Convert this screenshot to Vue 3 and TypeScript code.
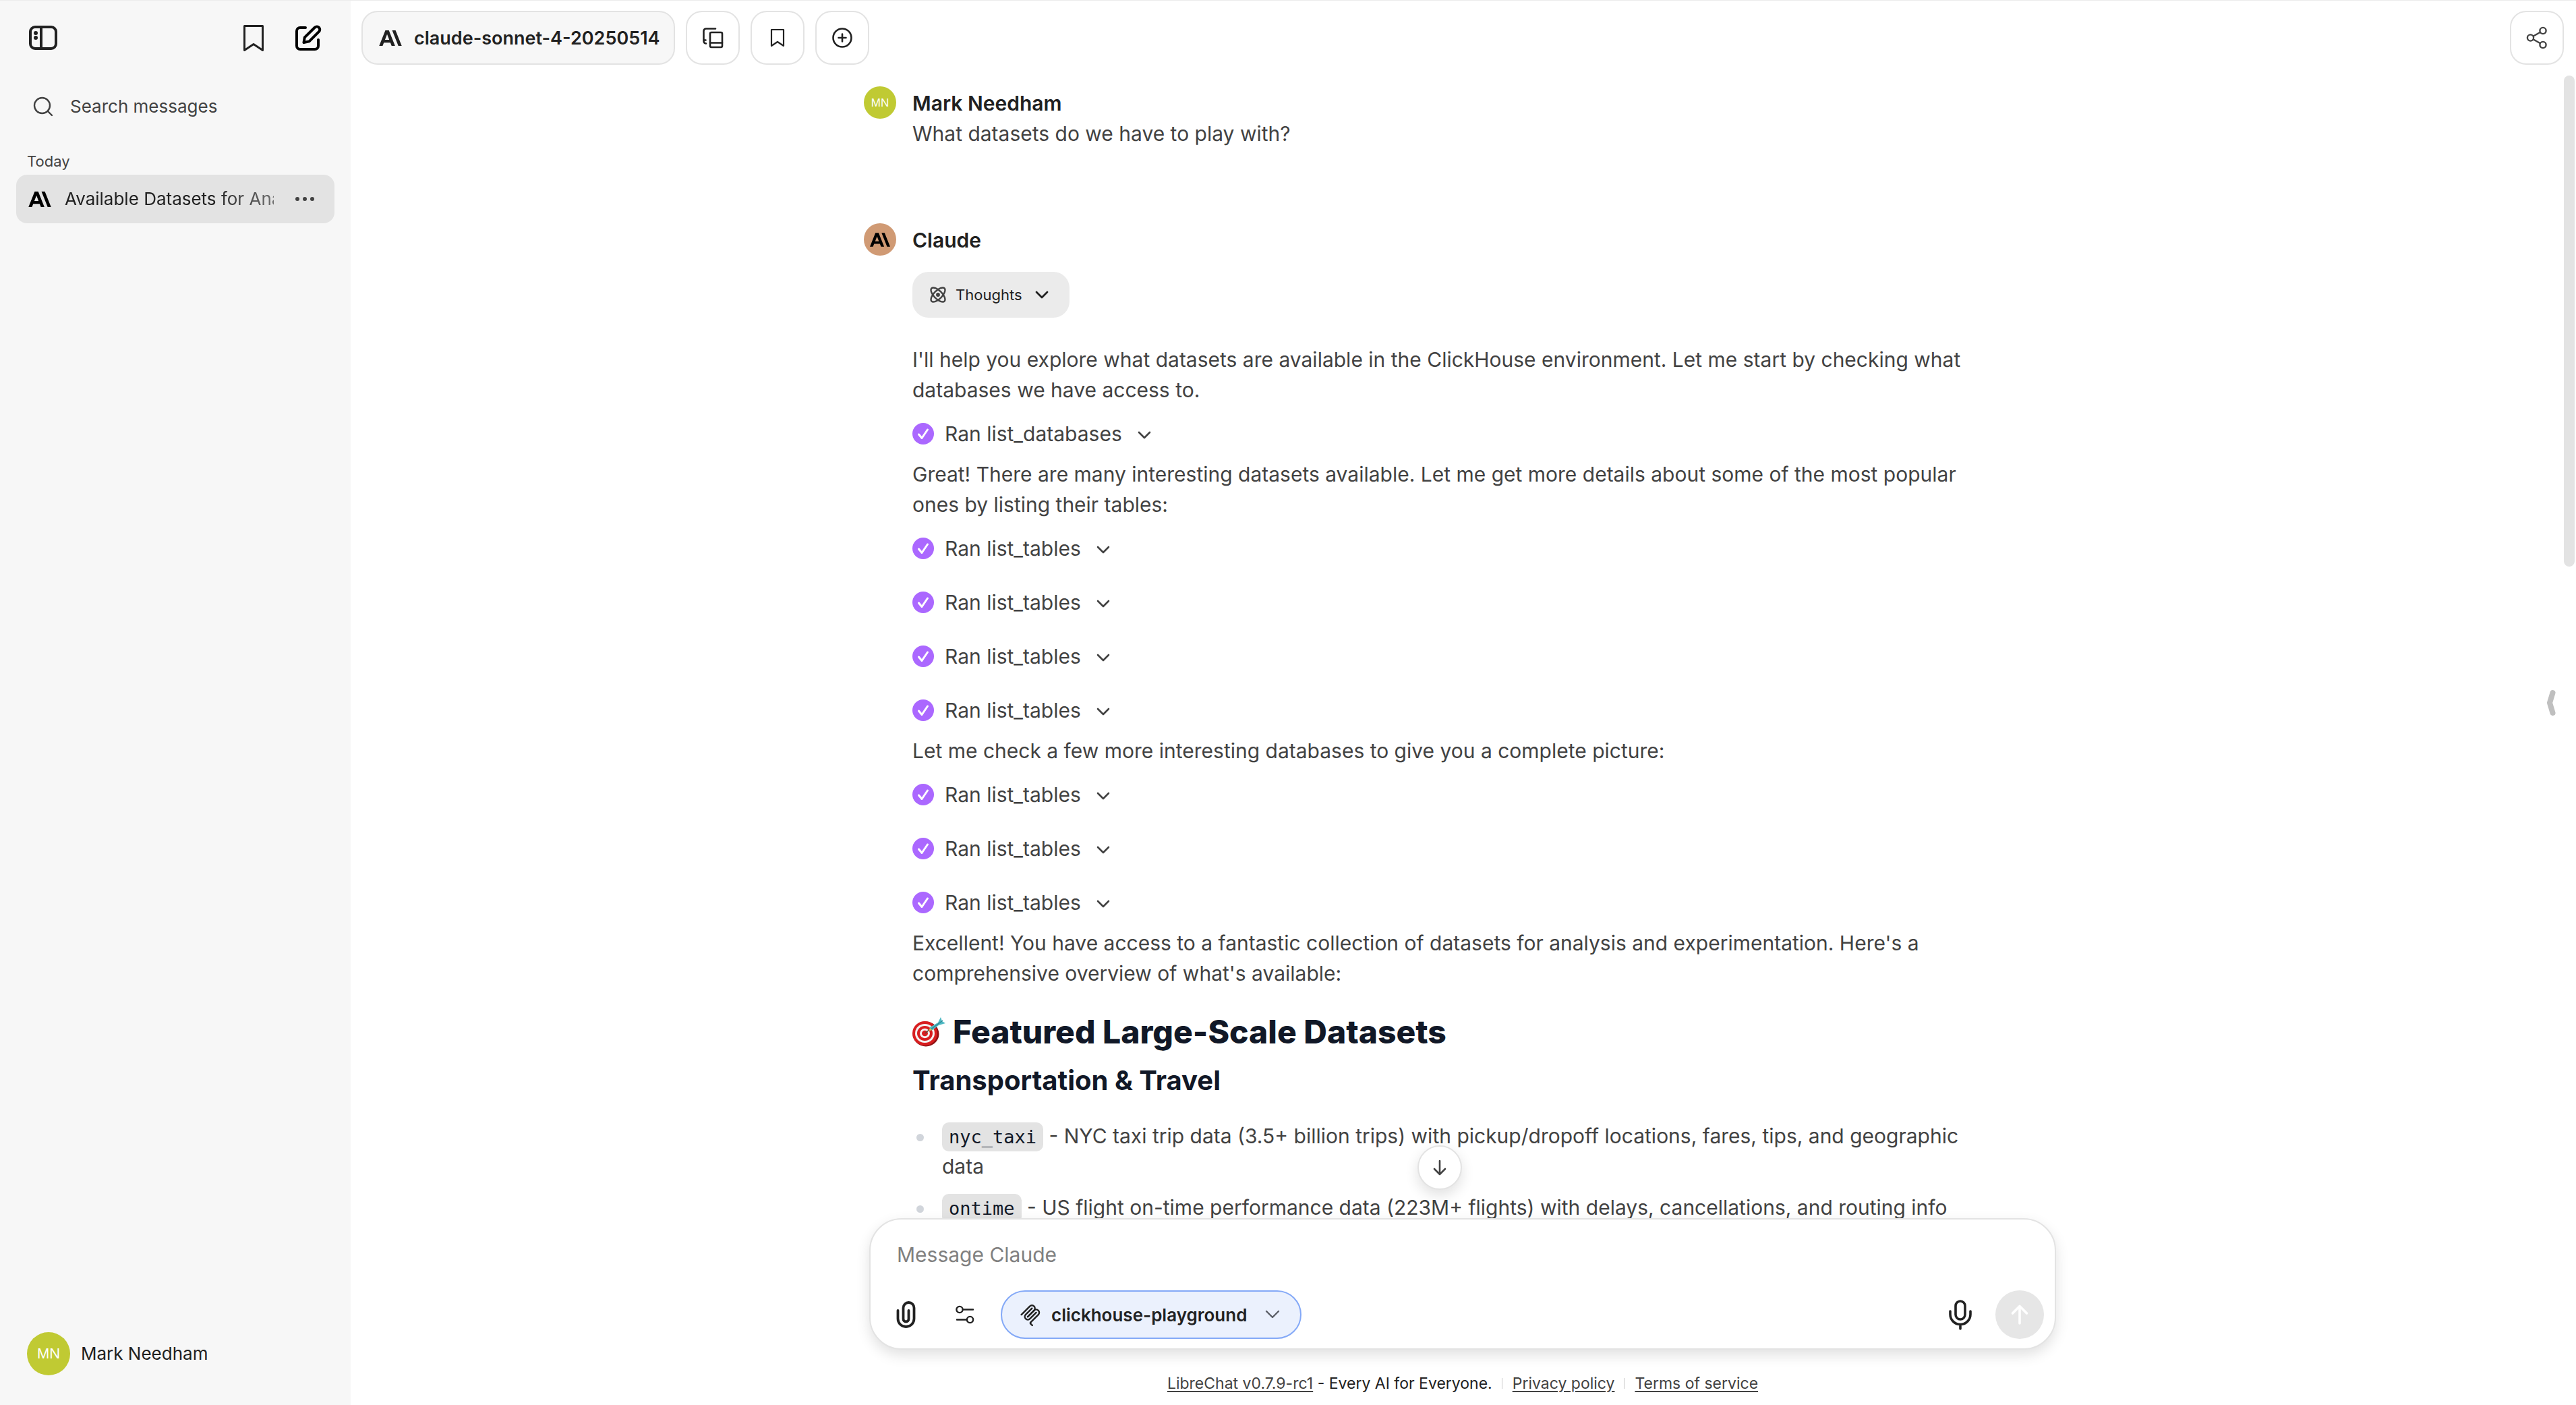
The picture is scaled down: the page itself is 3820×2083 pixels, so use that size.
<script setup lang="ts">
import { ref } from 'vue'

type Block =
  | { kind: 'text'; text: string }
  | { kind: 'tool'; text: string }

interface Dataset {
  code: string
  text: string
}

const search = ref('')
const draft = ref('')

const blocks: Block[] = [
  { kind: 'text', text: "I'll help you explore what datasets are available in the ClickHouse environment. Let me start by checking what databases we have access to." },
  { kind: 'tool', text: 'Ran list_databases' },
  { kind: 'text', text: 'Great! There are many interesting datasets available. Let me get more details about some of the most popular ones by listing their tables:' },
  { kind: 'tool', text: 'Ran list_tables' },
  { kind: 'tool', text: 'Ran list_tables' },
  { kind: 'tool', text: 'Ran list_tables' },
  { kind: 'tool', text: 'Ran list_tables' },
  { kind: 'text', text: 'Let me check a few more interesting databases to give you a complete picture:' },
  { kind: 'tool', text: 'Ran list_tables' },
  { kind: 'tool', text: 'Ran list_tables' },
  { kind: 'tool', text: 'Ran list_tables' },
  { kind: 'text', text: "Excellent! You have access to a fantastic collection of datasets for analysis and experimentation. Here's a comprehensive overview of what's available:" },
]

const datasets: Dataset[] = [
  { code: 'nyc_taxi', text: 'NYC taxi trip data (3.5+ billion trips) with pickup/dropoff locations, fares, tips, and geographic data' },
  { code: 'ontime', text: 'US flight on-time performance data (223M+ flights) with delays, cancellations, and routing info' },
]

const anthropic =
  'M13.827 3.52h3.603L24 20h-3.603l-6.57-16.48zm-7.258 0h3.767L16.906 20h-3.674l-1.343-3.461H5.017l-1.344 3.46H0L6.57 3.522zm4.132 9.959L8.453 7.687 6.205 13.48H10.7z'
</script>

<template>
  <div class="app">
    <aside class="sidebar">
      <div class="side-top">
        <button class="icon-btn" aria-label="Close sidebar">
          <svg width="44" height="38" viewBox="0 0 44 38" fill="none" stroke="#212121" stroke-width="4">
            <rect x="3" y="3" width="38" height="32" rx="7" />
            <path d="M19 3v32" />
            <circle cx="11" cy="12" r="3" fill="#212121" stroke="none" />
            <circle cx="11" cy="19" r="3" fill="#212121" stroke="none" />
          </svg>
        </button>
        <div class="side-actions">
          <button class="icon-btn" aria-label="Bookmarks">
            <svg width="32" height="42" viewBox="0 0 32 42" fill="none" stroke="#212121" stroke-width="3" stroke-linejoin="round">
              <path d="M2.500 3.500h27v36L16 30.500 2.500 39.500z" />
            </svg>
          </button>
          <button class="icon-btn" aria-label="New chat">
            <svg width="42" height="42" viewBox="0 0 42 42" fill="none" stroke="#000" stroke-width="4" stroke-linecap="round" stroke-linejoin="round">
              <path d="M17 6H9a5 5 0 0 0-5 5v22a5 5 0 0 0 5 5h22a5 5 0 0 0 5-5v-9" />
              <path d="M31 5.500a4.400 4.400 0 0 1 6.200 6.200L22.500 26.400 14.500 28l1.300-7.600z" />
            </svg>
          </button>
        </div>
      </div>
      <label class="search">
        <svg width="32" height="32" viewBox="0 0 32 32" fill="none" stroke="#424242" stroke-width="2.400" stroke-linecap="round">
          <circle cx="14.500" cy="14.500" r="11.500" />
          <path d="M23 23l6 6" />
        </svg>
        <input v-model="search" type="text" placeholder="Search messages" aria-label="Search messages" />
      </label>
      <h2 class="group">Today</h2>
      <a class="convo" href="#">
        <svg class="convo-logo" width="34" height="23" viewBox="0 3.500 24 16.500"><path :d="anthropic" /></svg>
        <span class="convo-title">Available Datasets for Analysis</span>
        <svg width="28" height="8" viewBox="0 0 28 8" fill="#424242">
          <circle cx="3" cy="4" r="3" /><circle cx="14" cy="4" r="3" /><circle cx="25" cy="4" r="3" />
        </svg>
      </a>
      <button class="account">
        <span class="avatar avatar-lg">MN</span>
        <span>Mark Needham</span>
      </button>
    </aside>

    <main class="main">
      <header class="header">
        <button class="model">
          <svg width="34" height="23" viewBox="0 3.500 24 16.500" fill="#212121"><path :d="anthropic" /></svg>
          <span>claude-sonnet-4-20250514</span>
        </button>
        <button class="square" aria-label="Presets">
          <svg width="32" height="32" viewBox="0 0 32 32" fill="none" stroke="#212121" stroke-width="2.600" stroke-linecap="round" stroke-linejoin="round">
            <rect x="12" y="8" width="18" height="22" rx="2" />
            <path d="M12 23.500h18M20 2.500H6a3.500 3.500 0 0 0-3.500 3.500v15a3.500 3.500 0 0 0 3.500 3.500M2.500 19.500h3" />
          </svg>
        </button>
        <button class="square" aria-label="Bookmark">
          <svg width="22" height="30" viewBox="0 0 22 30" fill="none" stroke="#212121" stroke-width="2.200" stroke-linejoin="round">
            <path d="M2 3h18v24l-9-6-9 6z" />
          </svg>
        </button>
        <button class="square" aria-label="Add conversation">
          <svg width="32" height="32" viewBox="0 0 32 32" fill="none" stroke="#212121" stroke-width="2.600" stroke-linecap="round">
            <circle cx="16" cy="16" r="13.500" />
            <path d="M16 10.500v11M10.500 16h11" />
          </svg>
        </button>
        <button class="square share" aria-label="Share">
          <svg width="32" height="34" viewBox="0 0 32 34" fill="none" stroke="#424242" stroke-width="2.400">
            <circle cx="6.500" cy="17" r="4.600" />
            <circle cx="25" cy="6.500" r="4.600" />
            <circle cx="25" cy="27.500" r="4.600" />
            <path d="M10.500 14.700l10.500-6M10.500 19.300l10.500 6" />
          </svg>
        </button>
      </header>

      <section class="scroll">
        <div class="thread">
          <article class="message">
            <span class="avatar">MN</span>
            <div class="body">
              <h3 class="name">Mark Needham</h3>
              <p>What datasets do we have to play with?</p>
            </div>
          </article>

          <article class="message reply">
            <span class="avatar avatar-claude">
              <svg width="30" height="21" viewBox="0 3.500 24 16.500"><path :d="anthropic" /></svg>
            </span>
            <div class="body">
              <h3 class="name">Claude</h3>
              <button class="thoughts">
                <svg width="28" height="28" viewBox="0 0 24 24" fill="none" stroke="#424242" stroke-width="2">
                  <circle cx="12" cy="12" r="1.500" fill="#424242" />
                  <path d="M20.200 20.200c2.040-2.030.02-7.360-4.500-11.900-4.540-4.520-9.870-6.540-11.900-4.500-2.040 2.030-.02 7.360 4.500 11.900 4.540 4.520 9.870 6.540 11.900 4.500Z" />
                  <path d="M15.700 15.700c4.520-4.540 6.540-9.870 4.500-11.900-2.030-2.040-7.360-.02-11.900 4.500-4.520 4.540-6.540 9.870-4.500 11.900 2.030 2.040 7.360.02 11.900-4.500Z" />
                </svg>
                <span>Thoughts</span>
                <svg class="thoughts-chevron" width="22" height="14" viewBox="0 0 22 14" fill="none" stroke="#212121" stroke-width="2.800" stroke-linecap="round" stroke-linejoin="round">
                  <path d="M3 3l8 8 8-8" />
                </svg>
              </button>
              <template v-for="(block, i) in blocks" :key="i">
                <p v-if="block.kind === 'text'">{{ block.text }}</p>
                <button v-else class="tool">
                  <svg width="32" height="32" viewBox="0 0 32 32" fill="none">
                    <circle cx="16" cy="16" r="16" fill="#ab68ff" />
                    <path d="M9.500 17l4.500 5.500L22.500 10" stroke="#fff" stroke-width="3" stroke-linecap="round" stroke-linejoin="round" />
                  </svg>
                  <span>{{ block.text }}</span>
                  <svg class="tool-chevron" width="22" height="14" viewBox="0 0 22 14" fill="none" stroke="#424242" stroke-width="2.600" stroke-linecap="round" stroke-linejoin="round">
                    <path d="M3 3l8 8 8-8" />
                  </svg>
                </button>
              </template>
              <h1 class="h-large">
                <svg width="50" height="44" viewBox="0 0 50 44" role="img" aria-label="Target">
                  <ellipse cx="20" cy="25" rx="19.500" ry="18.500" fill="#8f1214" />
                  <ellipse cx="18.500" cy="24" rx="18.500" ry="18" fill="#d81e20" />
                  <ellipse cx="18.500" cy="24" rx="14.500" ry="14" fill="#f4f1f1" />
                  <ellipse cx="18.500" cy="24" rx="11.500" ry="11" fill="#d81e20" />
                  <ellipse cx="18.500" cy="24" rx="7.500" ry="7.200" fill="#f4f1f1" />
                  <ellipse cx="18.500" cy="24" rx="4.500" ry="4.300" fill="#d81e20" />
                  <path d="M19 24L28 16" stroke="#5d4a3a" stroke-width="1.600" />
                  <path d="M25 20l1-5 12-7 4-8 2 6 5 3-10 3-9 7z" fill="#4fb9c4" />
                  <path d="M28 17.500L45 5" stroke="#2b8794" stroke-width="1.400" />
                  <path d="M24 20.500l2-4 3 2.500z" fill="#f2b632" />
                </svg>
                Featured Large-Scale Datasets
              </h1>
              <h2 class="h-medium">Transportation &amp; Travel</h2>
              <ul class="list">
                <li v-for="item in datasets" :key="item.code"><code>{{ item.code }}</code> - {{ item.text }}</li>
              </ul>
            </div>
          </article>
        </div>
        <div class="scrollbar"></div>
        <button class="to-bottom" aria-label="Scroll to bottom">
          <svg width="24" height="26" viewBox="0 0 24 26" fill="none" stroke="#424242" stroke-width="2.600" stroke-linecap="round" stroke-linejoin="round">
            <path d="M12 3v20M4 15l8 8 8-8" />
          </svg>
        </button>
      </section>

      <form class="composer" @submit.prevent>
        <textarea v-model="draft" rows="1" placeholder="Message Claude" aria-label="Message Claude"></textarea>
        <div class="tools">
          <button class="tool-btn" type="button" aria-label="Attach files">
            <svg width="32" height="44" viewBox="0 0 32 44" fill="none" stroke="#212121" stroke-width="3.800" stroke-linecap="round" stroke-linejoin="round">
              <path d="M3.500 16v12a12 12 0 0 0 24 0V12a8 8 0 0 0-16 0v16.500a4 4 0 0 0 8 0V16" />
            </svg>
          </button>
          <button class="tool-btn" type="button" aria-label="Tools">
            <svg width="30" height="30" viewBox="0 0 30 30" fill="none" stroke="#212121" stroke-width="2.400" stroke-linecap="round">
              <circle cx="7" cy="7.500" r="4.600" />
              <path d="M12 7.500h15M3 22.500h14" />
              <circle cx="22.500" cy="22.500" r="4.600" />
            </svg>
          </button>
          <button class="mcp" type="button">
            <svg width="36" height="36" viewBox="0 0 195 195" fill="none" stroke="#212121" stroke-width="13" stroke-linecap="round">
              <path d="M25 97.853L92.882 29.971c9.373-9.373 24.569-9.373 33.941 0 9.373 9.372 9.373 24.568 0 33.941l-51.265 51.265" />
              <path d="M76.265 114.470l50.558-50.558c9.373-9.373 24.569-9.373 33.942 0l.353.353c9.373 9.373 9.373 24.569 0 33.941L99.725 159.600c-3.124 3.124-3.124 8.189 0 11.313l12.606 12.607" />
              <path d="M109.853 46.941L59.648 97.146c-9.372 9.372-9.372 24.568 0 33.941 9.373 9.372 24.569 9.372 33.941 0l50.205-50.205" />
            </svg>
            <span>clickhouse-playground</span>
            <svg class="mcp-chevron" width="22" height="14" viewBox="0 0 22 14" fill="none" stroke="#5a5e66" stroke-width="2.400" stroke-linecap="round" stroke-linejoin="round">
              <path d="M2 2l9 9 9-9" />
            </svg>
          </button>
          <button class="tool-btn mic" type="button" aria-label="Use microphone">
            <svg width="36" height="46" viewBox="0 0 36 46" fill="none" stroke="#212121" stroke-width="3.600" stroke-linecap="round">
              <rect x="11" y="3" width="14" height="27" rx="7" />
              <path d="M3 18v4.500a15 15 0 0 0 30 0V18M18 37.500V44" />
            </svg>
          </button>
          <button class="send" type="submit" aria-label="Send message">
            <svg width="30" height="32" viewBox="0 0 30 32" fill="none" stroke="#fff" stroke-width="3.600" stroke-linecap="round" stroke-linejoin="round">
              <path d="M15 29V4M4.500 14L15 3.500 25.500 14" />
            </svg>
          </button>
        </div>
      </form>

      <footer class="footer">
        <span class="brand"><a href="#">LibreChat v0.7.9-rc1</a> - Every AI for Everyone.</span>
        <a class="legal" href="#">Privacy policy</a>
        <a class="legal" href="#">Terms of service</a>
      </footer>

      <button class="panel-handle" aria-label="Open side panel">
        <svg width="14" height="40" viewBox="0 0 14 40" fill="none" stroke="#bfbfbf" stroke-width="8" stroke-linecap="round" stroke-linejoin="round">
          <path d="M9.500 5L5 20l4.500 15" />
        </svg>
      </button>
    </main>
  </div>
</template>

<style>
body {
  margin: 0;
  background: #fff;
}
</style>

<style scoped>
.app {
  box-sizing: border-box;
  display: flex;
  height: 100vh;
  border-top: 1px solid #ececec;
  overflow: hidden;
  font-family: Inter, "Liberation Sans", sans-serif;
  font-size: 30px;
  line-height: 45px;
  color: #424242;
}
.app *,
.app *::before {
  box-sizing: border-box;
}
button,
input,
textarea {
  font: inherit;
  color: inherit;
  border: 0;
  padding: 0;
  margin: 0;
  background: none;
}
button {
  display: flex;
  align-items: center;
}
svg {
  display: block;
  flex: none;
}
h1,
h2,
h3,
p,
ul {
  margin: 0;
  padding: 0;
}
a {
  color: inherit;
}

/* Sidebar */
.sidebar {
  display: flex;
  flex-direction: column;
  flex: none;
  width: 520px;
  padding: 0 24px 44px;
  background: #f7f7f7;
  font-size: 26px;
  line-height: 40px;
  color: #212121;
}
.side-top {
  display: flex;
  align-items: center;
  justify-content: space-between;
  height: 110px;
  padding: 0 18px;
}
.side-actions {
  display: flex;
  align-items: center;
  gap: 44px;
}
.search {
  display: flex;
  align-items: center;
  gap: 24px;
  height: 94px;
  padding-left: 24px;
  color: #424242;
}
.search input {
  flex: 1;
  min-width: 0;
  height: 40px;
  outline: 0;
}
.search input::placeholder {
  color: #424242;
  opacity: 1;
}
.group {
  margin: 18px 16px 4px;
  font-size: 22px;
  line-height: 32px;
  font-weight: 400;
  color: #424242;
}
.convo {
  display: flex;
  align-items: center;
  height: 72px;
  padding: 0 30px 0 18px;
  border-radius: 16px;
  background: #e3e3e3;
  text-decoration: none;
}
.convo-title {
  flex: 1;
  min-width: 0;
  margin: 0 32px 0 20px;
  overflow: hidden;
  white-space: nowrap;
  mask-image: linear-gradient(to right, #000 70%, rgba(0, 0, 0, 0.6));
}
.account {
  gap: 16px;
  margin-top: auto;
  padding-left: 16px;
}
.avatar {
  display: flex;
  flex: none;
  align-items: center;
  justify-content: center;
  width: 48px;
  height: 48px;
  border-radius: 50%;
  background: #c0ca33;
  color: #fff;
  font-family: "Liberation Sans", Arial, sans-serif;
  font-size: 17px;
}
.avatar-lg {
  width: 64px;
  height: 64px;
  font-size: 22px;
}
.avatar-claude {
  background: #d09a74;
}

/* Header */
.main {
  position: relative;
  display: flex;
  flex: 1;
  flex-direction: column;
  min-width: 0;
  padding-right: 2px;
}
.header {
  display: flex;
  flex: none;
  gap: 16px;
  padding: 15px 16px 16px;
}
.model {
  gap: 18px;
  height: 80px;
  padding: 0 20px 0 24px;
  border: 2px solid #e3e3e3;
  border-radius: 24px;
  background: #f7f7f7;
  font-size: 27px;
  font-weight: 600;
  color: #212121;
}
.square {
  justify-content: center;
  width: 80px;
  height: 80px;
  border: 2px solid #e3e3e3;
  border-radius: 24px;
}
.share {
  margin-left: auto;
}

/* Conversation */
.scroll {
  position: relative;
  flex: 1;
  min-height: 0;
  padding: 16px 16px 0 0;
}
.thread {
  height: 100%;
  overflow: hidden;
}
.message {
  display: flex;
  gap: 24px;
  width: 100%;
  max-width: 1760px;
  margin: 0 auto;
}
.reply {
  margin-top: 110px;
}
.body {
  flex: 1;
  min-width: 0;
  padding: 2px 96px 0 0;
}
.name {
  font-size: 30px;
  line-height: 46px;
  font-weight: 600;
  color: #212121;
}
.thoughts {
  gap: 12px;
  height: 68px;
  margin: 24px 0 40px;
  padding: 0 30px 0 24px;
  border-radius: 24px;
  background: #ebebeb;
  font-size: 22px;
  color: #212121;
}
.thoughts-chevron {
  margin-left: 6px;
}
.tool {
  gap: 16px;
  height: 32px;
  margin: 26px 0 22px;
}
.tool + .tool {
  margin-top: 48px;
}
.tool-chevron {
  margin: 4px 0 0 6px;
}
.h-large {
  display: flex;
  align-items: center;
  gap: 10px;
  margin-top: 34px;
  font-size: 48px;
  line-height: 60px;
  font-weight: 800;
  color: #111827;
}
.h-medium {
  margin-top: 14px;
  font-size: 40px;
  line-height: 56px;
  font-weight: 700;
  color: #111827;
}
.list {
  display: flex;
  flex-direction: column;
  gap: 16px;
  margin-top: 32px;
  padding-left: 44px;
  list-style: none;
}
.list li {
  position: relative;
}
.list li::before {
  content: "";
  position: absolute;
  left: -38px;
  top: 19px;
  width: 11px;
  height: 11px;
  border-radius: 50%;
  background: #d1d5db;
}
code {
  padding: 6px 10px;
  border-radius: 10px;
  background: #e3e3e3;
  font-family: "DejaVu Sans Mono", monospace;
  font-size: 27px;
  line-height: 30px;
  font-weight: 400;
  color: #111827;
}
.scrollbar {
  position: absolute;
  top: 0;
  right: 0;
  width: 16px;
  height: 43%;
  border-radius: 8px;
  background: #e3e3e3;
}
.to-bottom {
  position: absolute;
  left: calc(50% - 34px);
  bottom: 42px;
  transform: translateX(-50%);
  justify-content: center;
  width: 66px;
  height: 66px;
  border: 2px solid #e3e3e3;
  border-radius: 50%;
  background: #fff;
  box-shadow: 0 8px 20px rgba(0, 0, 0, 0.12);
}

/* Composer */
.composer {
  position: relative;
  flex: none;
  width: 100%;
  max-width: 1760px;
  margin: 0 auto;
  padding: 30px 16px 14px 37px;
  border: 2px solid #e3e3e3;
  border-radius: 48px;
  background: #fff;
  box-shadow: 0 8px 20px rgba(0, 0, 0, 0.12);
}
.composer textarea {
  display: block;
  width: 100%;
  height: 45px;
  margin-left: 2px;
  outline: 0;
  resize: none;
  overflow: hidden;
}
.composer textarea::placeholder {
  color: #808080;
  opacity: 1;
}
.tools {
  display: flex;
  align-items: center;
  height: 72px;
  margin-top: 30px;
}
.tool-btn {
  margin-right: 56px;
}
.mcp {
  gap: 13px;
  height: 72px;
  margin-left: -18px;
  padding: 0 30px 0 24px;
  border: 2px solid #84a9f7;
  border-radius: 36px;
  background: #ebf1fd;
  font-size: 26px;
  font-weight: 600;
  color: #212121;
}
.mcp-chevron {
  margin-left: 14px;
}
.mic {
  margin: 0 34px 0 auto;
}
.send {
  justify-content: center;
  width: 72px;
  height: 72px;
  border-radius: 50%;
  background: #e6e6e6;
}
.footer {
  display: flex;
  flex: none;
  align-items: center;
  justify-content: center;
  padding: 34px 0 16px;
  font-size: 23px;
  line-height: 32px;
}
.brand {
  color: #212121;
}
.footer a {
  color: #424242;
  text-underline-offset: 3px;
}
.legal {
  position: relative;
  margin-left: 30px;
}
.legal::before {
  content: "";
  position: absolute;
  left: -16px;
  top: 8px;
  width: 1px;
  height: 16px;
  background: #c8c8c8;
}
.panel-handle {
  position: absolute;
  right: 30px;
  top: 50%;
  transform: translateY(-50%);
}
</style>
